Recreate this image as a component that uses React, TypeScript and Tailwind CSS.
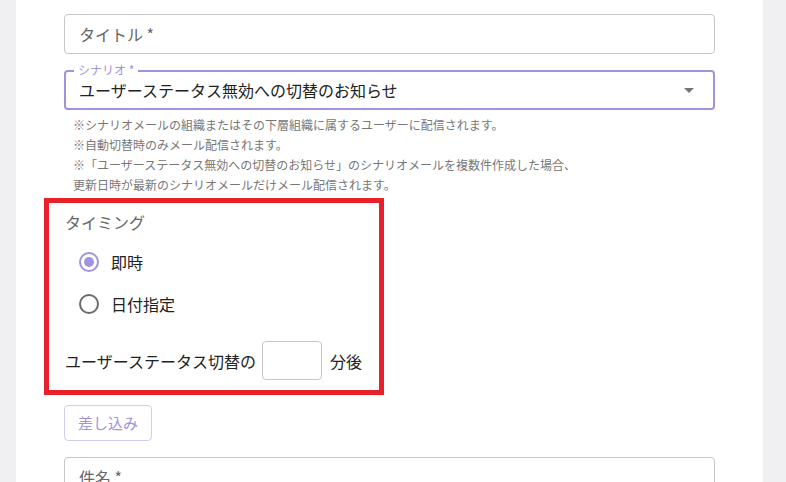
import { useState } from "react";

const font = { fontFamily: '"Noto Sans CJK JP", "Noto Sans", sans-serif' };

const Radio = ({ checked, label, onClick }: { checked: boolean; label: string; onClick: () => void }) => (
  <button onClick={onClick} className="flex items-center h-[42px] pl-[14px] text-left">
    <span
      className={`flex items-center justify-center w-[20px] h-[20px] rounded-full border-2 ${
        checked ? "border-[#a193dd]" : "border-[#6b6b6b]"
      }`}
    >
      {checked && <span className="w-[10px] h-[10px] rounded-full bg-[#a193dd]" />}
    </span>
    <span className="ml-[12px] text-[16px] text-[#222]">{label}</span>
  </button>
);

export default function App() {
  const [timing, setTiming] = useState("now");

  return (
    <div style={font} className="w-[786px] h-[482px] bg-[#f0f0f2] overflow-hidden flex">
      <div className="ml-[16px] w-[747px] h-full bg-white pl-[48px] pr-[48px]">
        <div className="mt-[14px] h-[40px] border border-[#c6c6c6] rounded-[4px] px-[14px] flex items-center text-[16px] text-[#666]">
          タイトル *
        </div>

        <div className="relative mt-[16px] h-[40px] border-2 border-[#a193dd] rounded-[4px] pl-[13px] pr-[14px] flex items-center justify-between">
          <span className="absolute -top-[10px] left-[8px] bg-white px-[4px] text-[12px] leading-[16px] text-[#a193dd]">
            シナリオ *
          </span>
          <span className="text-[16px] text-[#222]">ユーザーステータス無効への切替のお知らせ</span>
          <span className="w-0 h-0 border-l-[5px] border-r-[5px] border-t-[5px] border-l-transparent border-r-transparent border-t-[#757575] mr-[5px]" />
        </div>

        <div className="mt-[5px] pl-[9px] text-[12px] leading-[20px] text-[#777]">
          <p>※シナリオメールの組織またはその下層組織に属するユーザーに配信されます。</p>
          <p>※自動切替時のみメール配信されます。</p>
          <p>※「ユーザーステータス無効への切替のお知らせ」のシナリオメールを複数件作成した場合、</p>
          <p>更新日時が最新のシナリオメールだけメール配信されます。</p>
        </div>

        <div className="-ml-[20px] mt-[3px] w-[340px] border-[5px] border-[#e8202a] pl-[16px] pt-[7px] pb-[10px]">
          <div className="text-[16px] leading-[24px] text-[#666]">タイミング</div>
          <div className="mt-[7px] flex flex-col">
            <Radio checked={timing === "now"} label="即時" onClick={() => setTiming("now")} />
            <Radio checked={timing === "date"} label="日付指定" onClick={() => setTiming("date")} />
          </div>
          <div className="mt-[16px] flex items-center text-[16px] text-[#222]">
            <span>ユーザーステータス切替の</span>
            <input className="ml-[6px] w-[60px] h-[39px] border border-[#c6c6c6] rounded-[4px] outline-none px-[8px]" />
            <span className="ml-[8px]">分後</span>
          </div>
        </div>

        <button className="mt-[10px] w-[88px] h-[36px] border border-[#d3cbf0] rounded-[4px] text-[15px] text-[#a193dd] flex items-center justify-center">
          差し込み
        </button>

        <div className="mt-[16px] h-[40px] border border-[#c6c6c6] rounded-[4px] px-[14px] flex items-center text-[16px] text-[#666]">
          件名 *
        </div>
      </div>
    </div>
  );
}
